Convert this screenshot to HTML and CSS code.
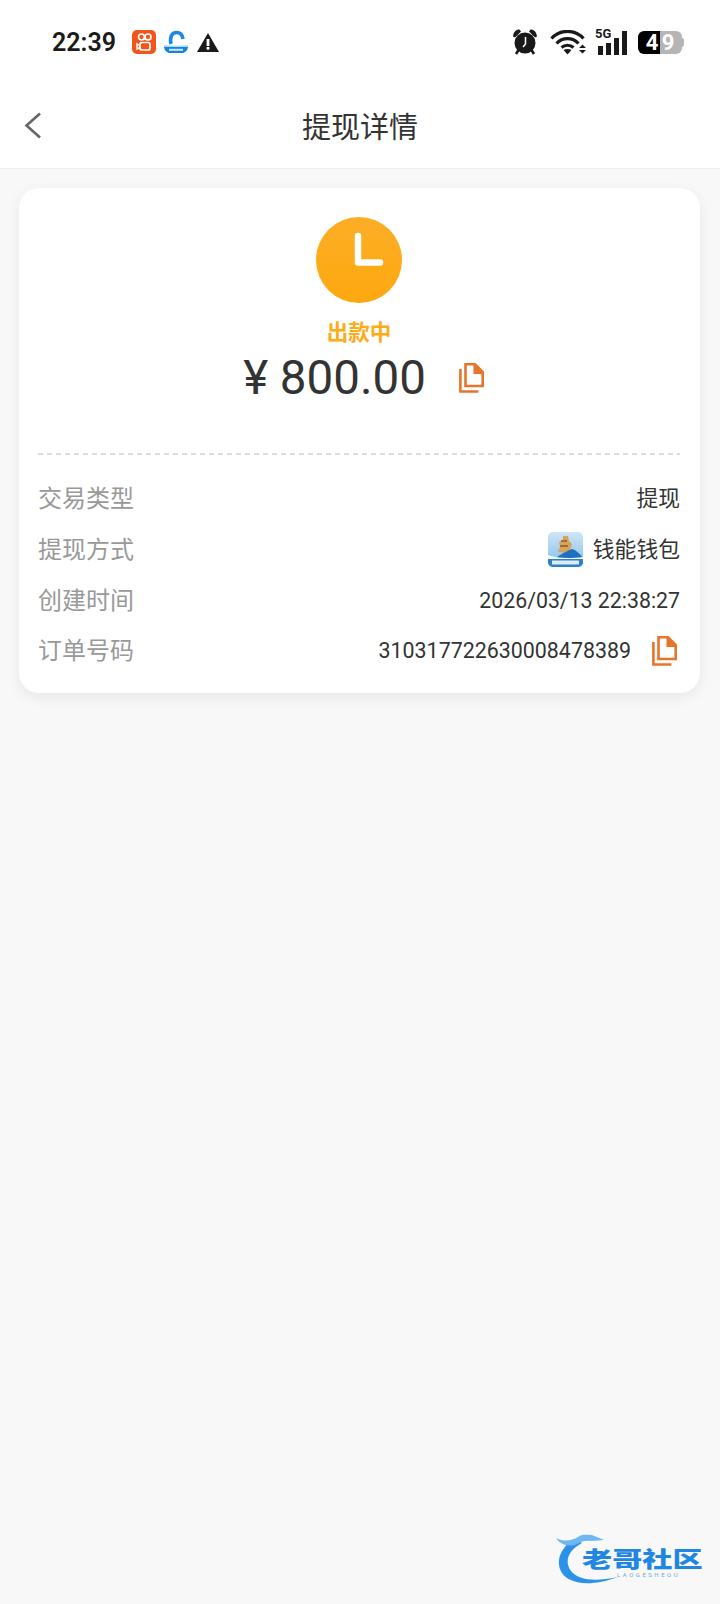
FILE: index.html
```html
<!DOCTYPE html>
<html>
<head>
    <title>提现详情</title>
    <link rel="stylesheet" href="styles.css">
</head>
<body>
    <div class="status-bar">
        <div class="status-left">
            <span class="clock">22:39</span>
            <svg class="app-icon" width="24" height="24" viewBox="0 0 24 24">
                <rect width="24" height="24" rx="5" fill="#f2541b"/>
                <circle cx="9.500" cy="7" r="3" fill="none" stroke="#fff" stroke-width="1.700"/>
                <circle cx="16" cy="7" r="3" fill="none" stroke="#fff" stroke-width="1.700"/>
                <rect x="8" y="12.500" width="10" height="7.500" rx="2" fill="none" stroke="#fff" stroke-width="1.700"/>
                <path d="M8 16l-3-2v5l3-1.500" fill="none" stroke="#fff" stroke-width="1.500"/>
            </svg>
            <svg class="app-icon" width="24" height="24" viewBox="0 0 24 24">
                <path d="M7 14C5.500 7 8 2.500 12.500 2.500c3.500 0 6 2.500 6.500 6.500" fill="none" stroke="#1c86e8" stroke-width="3.600"/>
                <path d="M0 15c8 1 16 1 24 0v2H0z" fill="#a8dcf8"/>
                <path d="M0 17h24c-.5 3.500-3 6-6 6H6C3 23 .5 20.500 0 17z" fill="#1583e4"/>
                <rect x="5" y="18.800" width="14" height="2" fill="#cfeaff"/>
            </svg>
            <svg class="warn-icon" width="22" height="19" viewBox="0 0 22 19">
                <path d="M11 0l11 19H0z" fill="#1a1a1a"/>
                <rect x="9.600" y="6" width="2.800" height="7" fill="#fff"/>
                <rect x="9.600" y="14" width="2.800" height="2.600" fill="#fff"/>
            </svg>
        </div>
        <div class="status-right">
            <svg width="24" height="26" viewBox="0 0 24 26">
                <circle cx="12" cy="14" r="10.500" fill="#1a1a1a"/>
                <path d="M12.500 8v7l-2.500 3" fill="none" stroke="#fff" stroke-width="1.500"/>
                <path d="M0 7.500C.5 3 3 .5 6.500 .5L8 2.500 2 8.500zM24 7.500C23.500 3 21 .5 17.500 .5L16 2.500 22 8.500z" fill="#1a1a1a"/>
                <path d="M5.500 21l-2.500 4M18.500 21l2.500 4" stroke="#1a1a1a" stroke-width="2.600"/>
            </svg>
            <svg width="36" height="25" viewBox="0 0 36 25">
                <path d="M1.500 8.500C10 -1 25 -1 33.500 8.500" fill="none" stroke="#1a1a1a" stroke-width="3.200"/>
                <path d="M6.500 13.500C12.500 7 22.500 7 28.500 13.500" fill="none" stroke="#1a1a1a" stroke-width="3.200"/>
                <path d="M11.500 17.500c3.500-3 8.500-3 12 0" fill="none" stroke="#1a1a1a" stroke-width="3.200"/>
                <path d="M17.500 24.500l-4-4.500c2.500-1.500 5.500-1.500 8 0z" fill="#1a1a1a"/>
                <path d="M29 18h7l-3.500-3.500zM29 20h7l-3.500 3.500z" fill="#1a1a1a"/>
            </svg>
            <div class="signal">
                <span class="signal-label">5G</span>
                <span class="bar bar-1"></span>
                <span class="bar bar-2"></span>
                <span class="bar bar-3"></span>
                <span class="bar bar-4"></span>
            </div>
            <div class="battery">
                <span class="battery-level">4</span>
                <span class="battery-rest">9</span>
                <span class="battery-tip"></span>
            </div>
        </div>
    </div>

    <div class="header">
        <svg class="back" width="18" height="27" viewBox="0 0 18 27">
            <path d="M16 1.500L2.500 13.500 16 25.500" fill="none" stroke="#666" stroke-width="2.600"/>
        </svg>
        <h1 class="title">提现详情</h1>
    </div>

    <div class="card">
        <div class="summary">
            <svg class="status-icon" width="86" height="86" viewBox="0 0 86 86">
                <defs>
                    <linearGradient id="clock-fill" x1="0" y1="0" x2="0" y2="1">
                        <stop offset="0" stop-color="#fcae26"/>
                        <stop offset="1" stop-color="#fea80f"/>
                    </linearGradient>
                </defs>
                <circle cx="43" cy="43" r="43" fill="url(#clock-fill)"/>
                <path d="M42 19v26.500h22" fill="none" stroke="#fff" stroke-width="6.500" stroke-linecap="round" stroke-linejoin="round"/>
            </svg>
            <div class="status-text">出款中</div>
            <div class="amount-line">
                <span class="amount">¥ 800.00</span>
                <svg width="25" height="30" viewBox="0 0 25 30">
                    <path class="copy-line" d="M6.500 1.300h9.500l7.700 7.700v14H6.500z"/>
                    <path class="copy-fill" d="M14.500 1h2l8 8v2h-10z"/>
                    <path class="copy-line" d="M1.400 6v22.500h18"/>
                </svg>
            </div>
        </div>
        <div class="divider"></div>

        <div class="rows">
            <div class="row">
                <span class="label">交易类型</span>
                <span class="value"><span class="cjk">提现</span></span>
            </div>
            <div class="row">
                <span class="label">提现方式</span>
                <span class="value with-icon">
                    <svg width="35" height="35" viewBox="0 0 35 35">
                        <defs>
                            <clipPath id="wallet-clip"><rect width="35" height="35" rx="5"/></clipPath>
                            <linearGradient id="wallet-sky" x1="0" y1="0" x2="0" y2="1">
                                <stop offset="0" stop-color="#cfe6f5"/>
                                <stop offset="1" stop-color="#7fbde8"/>
                            </linearGradient>
                        </defs>
                        <g clip-path="url(#wallet-clip)">
                            <rect width="35" height="35" fill="url(#wallet-sky)"/>
                            <path d="M10 20l2-5-1-5 4-2 0-4 5 0 1 5 3 3-2 6-5 3z" fill="#d9a25a"/>
                            <path d="M13 9h6M12 14h8" stroke="#8a5a26" stroke-width="1.500"/>
                            <path d="M9 25c6-4 12-7 15-8 4 1 8 5 11 9v2H9z" fill="#1f6fc0"/>
                            <path d="M0 23c8 3 20 4 35 2v3H0z" fill="#f4fafe"/>
                            <rect y="27" width="35" height="8" fill="#2d7fc8"/>
                            <rect x="4" y="28.500" width="27" height="4" fill="#dcecf8"/>
                        </g>
                    </svg>
                    <span class="cjk">钱能钱包</span>
                </span>
            </div>
            <div class="row">
                <span class="label">创建时间</span>
                <span class="value">2026/03/13 22:38:27</span>
            </div>
            <div class="row">
                <span class="label">订单号码</span>
                <span class="value order">
                    310317722630008478389
                    <svg width="25" height="30" viewBox="0 0 25 30">
                        <path class="copy-line" d="M6.500 1.300h9.500l7.700 7.700v14H6.500z"/>
                        <path class="copy-fill" d="M14.500 1h2l8 8v2h-10z"/>
                        <path class="copy-line" d="M1.400 6v22.500h18"/>
                    </svg>
                </span>
            </div>
        </div>
    </div>

    <div class="watermark">
        <svg width="150" height="60" viewBox="0 0 150 60">
            <path d="M18 9C4 18-1 32 6 43c7 10 26 15 56 4-24 5-40 3-47-6C8 32 12 20 26 13z" fill="#2a92ea"/>
            <path d="M0 8c8 4 16 3 22-1 4-3 8-2 14-2l12 5-12 1c-6-1-11 0-17 4C10 17 3 13 0 8z" fill="#6db8f2"/>
        </svg>
        <span class="watermark-name">老哥社区</span>
        <span class="watermark-sub">LAOGESHEOU</span>
    </div>
</body>
</html>
```

FILE: styles.css
```css
* {
    box-sizing: border-box;
}

html,
body {
    margin: 0;
    height: 1604px;
    overflow: hidden;
}

body {
    position: relative;
    background-color: #f8f8f8;
    color: #333;
    font-family: Roboto, "Noto Sans CJK SC", sans-serif;
}

.status-bar {
    display: flex;
    justify-content: space-between;
    align-items: center;
    height: 84px;
    padding: 0 36px 0 52px;
    background-color: #fff;
}

.status-left,
.status-right {
    display: flex;
    align-items: center;
}

.clock {
    margin-right: 16px;
    color: #1a1a1a;
    font-size: 25px;
    font-weight: 600;
}

.app-icon {
    margin-right: 8px;
}

.warn-icon {
    margin-left: 1px;
}

.status-right {
    gap: 13px;
}

.signal {
    position: relative;
    display: flex;
    align-items: flex-end;
    gap: 3px;
    height: 25px;
    padding-left: 3px;
    margin-left: -4px;
}

.signal-label {
    position: absolute;
    top: -3px;
    left: 0;
    color: #1a1a1a;
    font-size: 13px;
    font-weight: 700;
    line-height: 14px;
}

.bar {
    width: 5px;
    background-color: #1a1a1a;
}

.bar-1 { height: 9px; }
.bar-2 { height: 12px; }
.bar-3 { height: 17px; }
.bar-4 { height: 24px; }

.battery {
    display: flex;
    align-items: center;
    height: 23px;
    margin-left: -2px;
    color: #fff;
    font-size: 22px;
    font-weight: 700;
    text-align: center;
}

.battery-level,
.battery-rest {
    width: 22px;
    height: 23px;
    line-height: 23px;
}

.battery-level {
    padding-left: 6px;
    background-color: #000;
    border-radius: 6px 0 0 6px;
}

.battery-rest {
    padding-right: 6px;
    background-color: #b5b5b5;
    border-radius: 0 6px 6px 0;
}

.battery-tip {
    width: 2px;
    height: 9px;
    background-color: #b5b5b5;
    border-radius: 0 2px 2px 0;
}

.header {
    position: relative;
    display: flex;
    justify-content: center;
    align-items: center;
    height: 85px;
    padding-bottom: 3px;
    background-color: #fff;
    border-bottom: 1px solid #eee;
}

.back {
    position: absolute;
    left: 24px;
    top: 28px;
}

.title {
    margin: 0;
    font-size: 29px;
    font-weight: 400;
}

.card {
    margin: 19px 20px 0 19px;
    padding: 29px 20px 17px 19px;
    background-color: #fff;
    border-radius: 20px;
    box-shadow: 0 4px 14px rgba(0, 0, 0, 0.07);
}

.summary {
    display: flex;
    flex-direction: column;
    align-items: center;
    padding-bottom: 44px;
}

.divider {
    height: 1.500px;
    background-image: repeating-linear-gradient(90deg, #dcdcdc 0, #dcdcdc 5px, transparent 5px, transparent 9px);
}

.status-icon {
    display: block;
}

.status-text {
    margin-top: 16px;
    color: #fdab17;
    font-size: 21.500px;
    font-weight: 700;
    line-height: 28px;
}

.amount-line {
    display: flex;
    align-items: center;
    gap: 33px;
    height: 62px;
    margin-left: 9px;
}

.amount {
    font-size: 47.500px;
    line-height: 62px;
}

.copy-line {
    fill: none;
    stroke: #e8742c;
    stroke-width: 2.600;
}

.copy-fill {
    fill: #e8742c;
}

.rows {
    margin-top: 19px;
}

.row {
    display: flex;
    justify-content: space-between;
    align-items: center;
    height: 50.700px;
}

.label {
    padding-bottom: 4px;
    color: #999;
    font-size: 24px;
}

.value {
    display: flex;
    align-items: center;
    font-size: 21.300px;
}

.cjk {
    padding-bottom: 4px;
    font-size: 21.800px;
}

.with-icon {
    gap: 10px;
}

.order {
    gap: 21px;
    margin-right: 3px;
    font-size: 21.400px;
}

.watermark {
    position: absolute;
    top: 1530px;
    left: 556px;
    width: 150px;
    height: 60px;
}

.watermark svg {
    display: block;
}

.watermark-name {
    position: absolute;
    top: 17px;
    left: 26px;
    color: #1f87e3;
    font-size: 22px;
    font-weight: 900;
    line-height: 26px;
    white-space: nowrap;
    transform: scaleX(1.370);
    transform-origin: left center;
}

.watermark-sub {
    position: absolute;
    top: 41px;
    left: 61px;
    color: #6aa9d8;
    font-size: 6px;
    line-height: 7px;
    letter-spacing: 2.500px;
}
```
